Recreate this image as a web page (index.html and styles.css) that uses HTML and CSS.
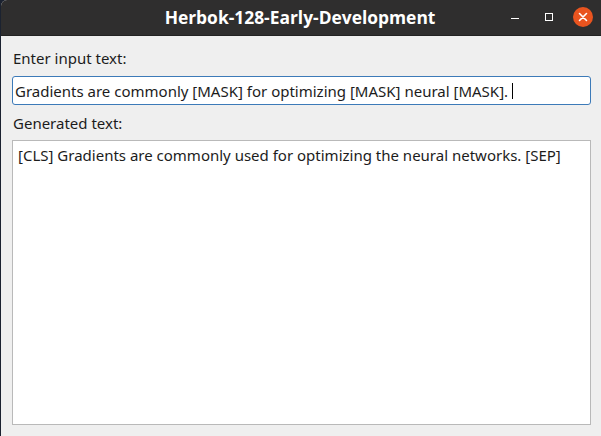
FILE: index.html
```html
<!DOCTYPE html>
<html>
<head>
<meta charset="utf-8">
<link rel="stylesheet" href="styles.css">
</head>
<body>
<div class="window">
  <div class="titlebar">
    <div class="title">Herbok-128-Early-Development</div>
    <div class="controls">
      <span class="btn-min"></span>
      <span class="btn-max"></span>
      <span class="btn-close">
        <svg width="10" height="10" viewBox="0 0 10 10"><path d="M1.5 1.5 L8.5 8.5 M8.5 1.5 L1.5 8.5" stroke="#fff" stroke-width="1.6" stroke-linecap="round"/></svg>
      </span>
    </div>
  </div>
  <div class="content">
    <div class="label">Enter input text:</div>
    <div class="input">Gradients are commonly [MASK] for optimizing [MASK] neural [MASK].<span class="caret"></span></div>
    <div class="label label2">Generated text:</div>
    <div class="output">[CLS] Gradients are commonly used for optimizing the neural networks. [SEP]</div>
  </div>
</div>
</body>
</html>
```
FILE: styles.css
```css
html, body {
  margin: 0;
  padding: 0;
  height: 100%;
}
body {
  background: #1b2230;
  font-family: "Noto Sans", "Open Sans", sans-serif;
  overflow: hidden;
}
.window {
  margin-left: 1px;
  height: 436px;
  display: flex;
  flex-direction: column;
  background: #efefef;
  border-top-left-radius: 6px;
  overflow: hidden;
}
.titlebar {
  height: 35px;
  flex: 0 0 35px;
  background: #2f2e2e;
  border-bottom: 1px solid #222;
  position: relative;
  display: flex;
  align-items: center;
  justify-content: center;
}
.title {
  color: #ffffff;
  font-family: "Open Sans", "Noto Sans", sans-serif;
  font-weight: 700;
  font-size: 17.4px;
  margin-right: 2px;
  margin-top: -1px;
}
.controls {
  position: absolute;
  right: 0;
  top: 0;
  height: 35px;
}
.btn-min {
  position: absolute;
  left: -90px;
  top: 18px;
  width: 8px;
  height: 1px;
  background: #fff;
}
.btn-max {
  position: absolute;
  left: -56px;
  top: 13px;
  width: 6px;
  height: 6px;
  border: 1px solid #fff;
}
.btn-close {
  position: absolute;
  left: -28px;
  top: 7px;
  width: 20px;
  height: 20px;
  border-radius: 50%;
  background: #e9541f;
  display: flex;
  align-items: center;
  justify-content: center;
}
.content {
  flex: 1;
  display: flex;
  flex-direction: column;
  padding: 12px 10px 11px 11px;
  color: #1c1c1c;
  font-size: 15px;
}
.label {
  line-height: 20px;
  margin-left: 1px;
}
.label2 {
  margin-top: 8px;
}
.input {
  margin-top: 8px;
  height: 27px;
  border: 1px solid #3c7ab8;
  border-radius: 3px;
  background: #fff;
  padding-left: 2px;
  white-space: nowrap;
  display: flex;
  align-items: center;
}
.caret {
  display: inline-block;
  width: 1px;
  height: 16px;
  background: #000;
  margin-left: 4px;
}
.output {
  margin-top: 7px;
  flex: 1;
  border: 1px solid #b9b9b9;
  background: #fff;
  padding: 4px 5px;
  line-height: 20px;
}
```
